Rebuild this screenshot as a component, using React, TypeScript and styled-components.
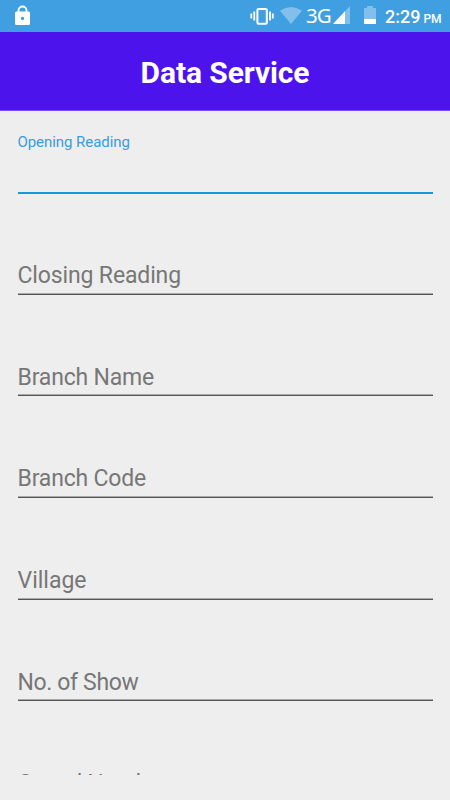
import React from 'react';
import styled, { createGlobalStyle } from 'styled-components';

const GlobalStyle = createGlobalStyle`
  * { box-sizing: border-box; }
  body { margin: 0; background: #eeeeee; font-family: Roboto, sans-serif; }
`;

const Screen = styled.div`
  display: flex;
  flex-direction: column;
  width: 450px;
  height: 800px;
  overflow: hidden;
  background: #eeeeee;
`;

const StatusBar = styled.header`
  display: flex;
  justify-content: space-between;
  flex: none;
  height: 32px;
  background: #409fe1;
  color: #fff;
`;

const StatusIcons = styled.svg`
  display: block;
  flex: none;
  height: 32px;
`;

const StatusRight = styled.div`
  display: flex;
  width: 201px;
`;

const Network = styled.span`
  width: 26px;
  padding-left: 1px;
  font: 400 20.5px/31px "Noto Sans", sans-serif;
  letter-spacing: -1px;
  white-space: nowrap;
`;

const Clock = styled.span`
  font-size: 18px;
  line-height: 33px;
  font-weight: 500;
  white-space: nowrap;
`;

const Meridiem = styled.small`
  margin-left: 3px;
  font-size: 12px;
`;

const TitleBar = styled.h1`
  flex: none;
  margin: 0;
  height: 79px;
  border-bottom: 1px solid #7250f2;
  background: #4d13ed;
  color: #fff;
  font-size: 30px;
  font-weight: 700;
  letter-spacing: -0.1px;
  line-height: 82px;
  text-align: center;
`;

const Form = styled.main`
  flex: none;
  height: 663.6px;
  padding: 22px 17.5px 0;
  overflow: hidden;
`;

const Field = styled.label<{ $active?: boolean; $tracking?: number }>`
  display: flex;
  flex-direction: column;
  justify-content: ${p => (p.$active ? 'flex-start' : 'flex-end')};
  height: ${p => (p.$active ? '61px' : '101.7px')};
  margin-bottom: ${p => (p.$active ? '-1.1px' : '0')};
  color: ${p => (p.$active ? '#389ce0' : '#777777')};
  font-size: ${p => (p.$active ? '15px' : '23px')};
  letter-spacing: ${p => p.$tracking ?? -0.14}px;
  line-height: ${p => (p.$active ? '18px' : '28px')};
`;

const Underline = styled.span<{ $active?: boolean }>`
  height: 2px;
  margin-top: ${p => (p.$active ? 'auto' : '2.7px')};
  background: ${p => (p.$active ? '#159ae0' : 'linear-gradient(#aaaaaa 50%, #555555 50%)')};
`;

const fields = [
  { name: 'Closing Reading' },
  { name: 'Branch Name', tracking: -0.18 },
  { name: 'Branch Code', tracking: -0.18 },
  { name: 'Village', tracking: 0 },
  { name: 'No. of Show', tracking: -0.36 },
  { name: 'Crowd Number', tracking: -0.3 },
];

export default function App() {
  return (
    <>
      <GlobalStyle />
      <Screen>
        <StatusBar>
          <StatusIcons width="40" viewBox="0 0 40 32" fill="#fff">
            <path d="M18.5 12v-1.5a4 4 0 0 1 8 0V12" fill="none" stroke="#fff" strokeWidth="1.8" />
            <path fillRule="evenodd" d="M16.5 11.5h12a1.5 1.5 0 0 1 1.5 1.5v10.5a1.5 1.5 0 0 1-1.5 1.5h-12a1.5 1.5 0 0 1-1.5-1.5V13a1.5 1.5 0 0 1 1.5-1.5zm6 5.2a1.7 1.7 0 1 0 0 3.4 1.7 1.7 0 0 0 0-3.4z" />
          </StatusIcons>
          <StatusRight>
            <StatusIcons width="56" viewBox="249 0 56 32">
              <rect x="257.4" y="8.9" width="9.4" height="14.8" rx="1" fill="none" stroke="#fff" strokeWidth="2" />
              <path d="M254.3 11.5v9M251.3 13.5v5M270 11.5v9M272.8 13.5v5" stroke="#fff" strokeWidth="1.8" />
              <path d="M280 10.7Q291 3.5 302 10.7L291 24Z" fill="#82bfeb" />
            </StatusIcons>
            <Network>3G</Network>
            <StatusIcons width="54" viewBox="331 0 54 32">
              <path d="M350 6v18h-17z" fill="#82bfeb" />
              <path d="M345 11.3V24h-12z" fill="#fff" />
              <path d="M364 8h3V6h6v2h3v16h-12z" fill="#82bfeb" />
              <path d="M364 19h12v4a1 1 0 0 1-1 1h-10a1 1 0 0 1-1-1z" fill="#fff" />
            </StatusIcons>
            <Clock>2:29<Meridiem>PM</Meridiem></Clock>
          </StatusRight>
        </StatusBar>
        <TitleBar>Data Service</TitleBar>
        <Form>
          <Field $active $tracking={-0.06}>Opening Reading<Underline $active /></Field>
          {fields.map(({ name, tracking }) => (
            <Field key={name} $tracking={tracking}>{name}<Underline /></Field>
          ))}
        </Form>
      </Screen>
    </>
  );
}
